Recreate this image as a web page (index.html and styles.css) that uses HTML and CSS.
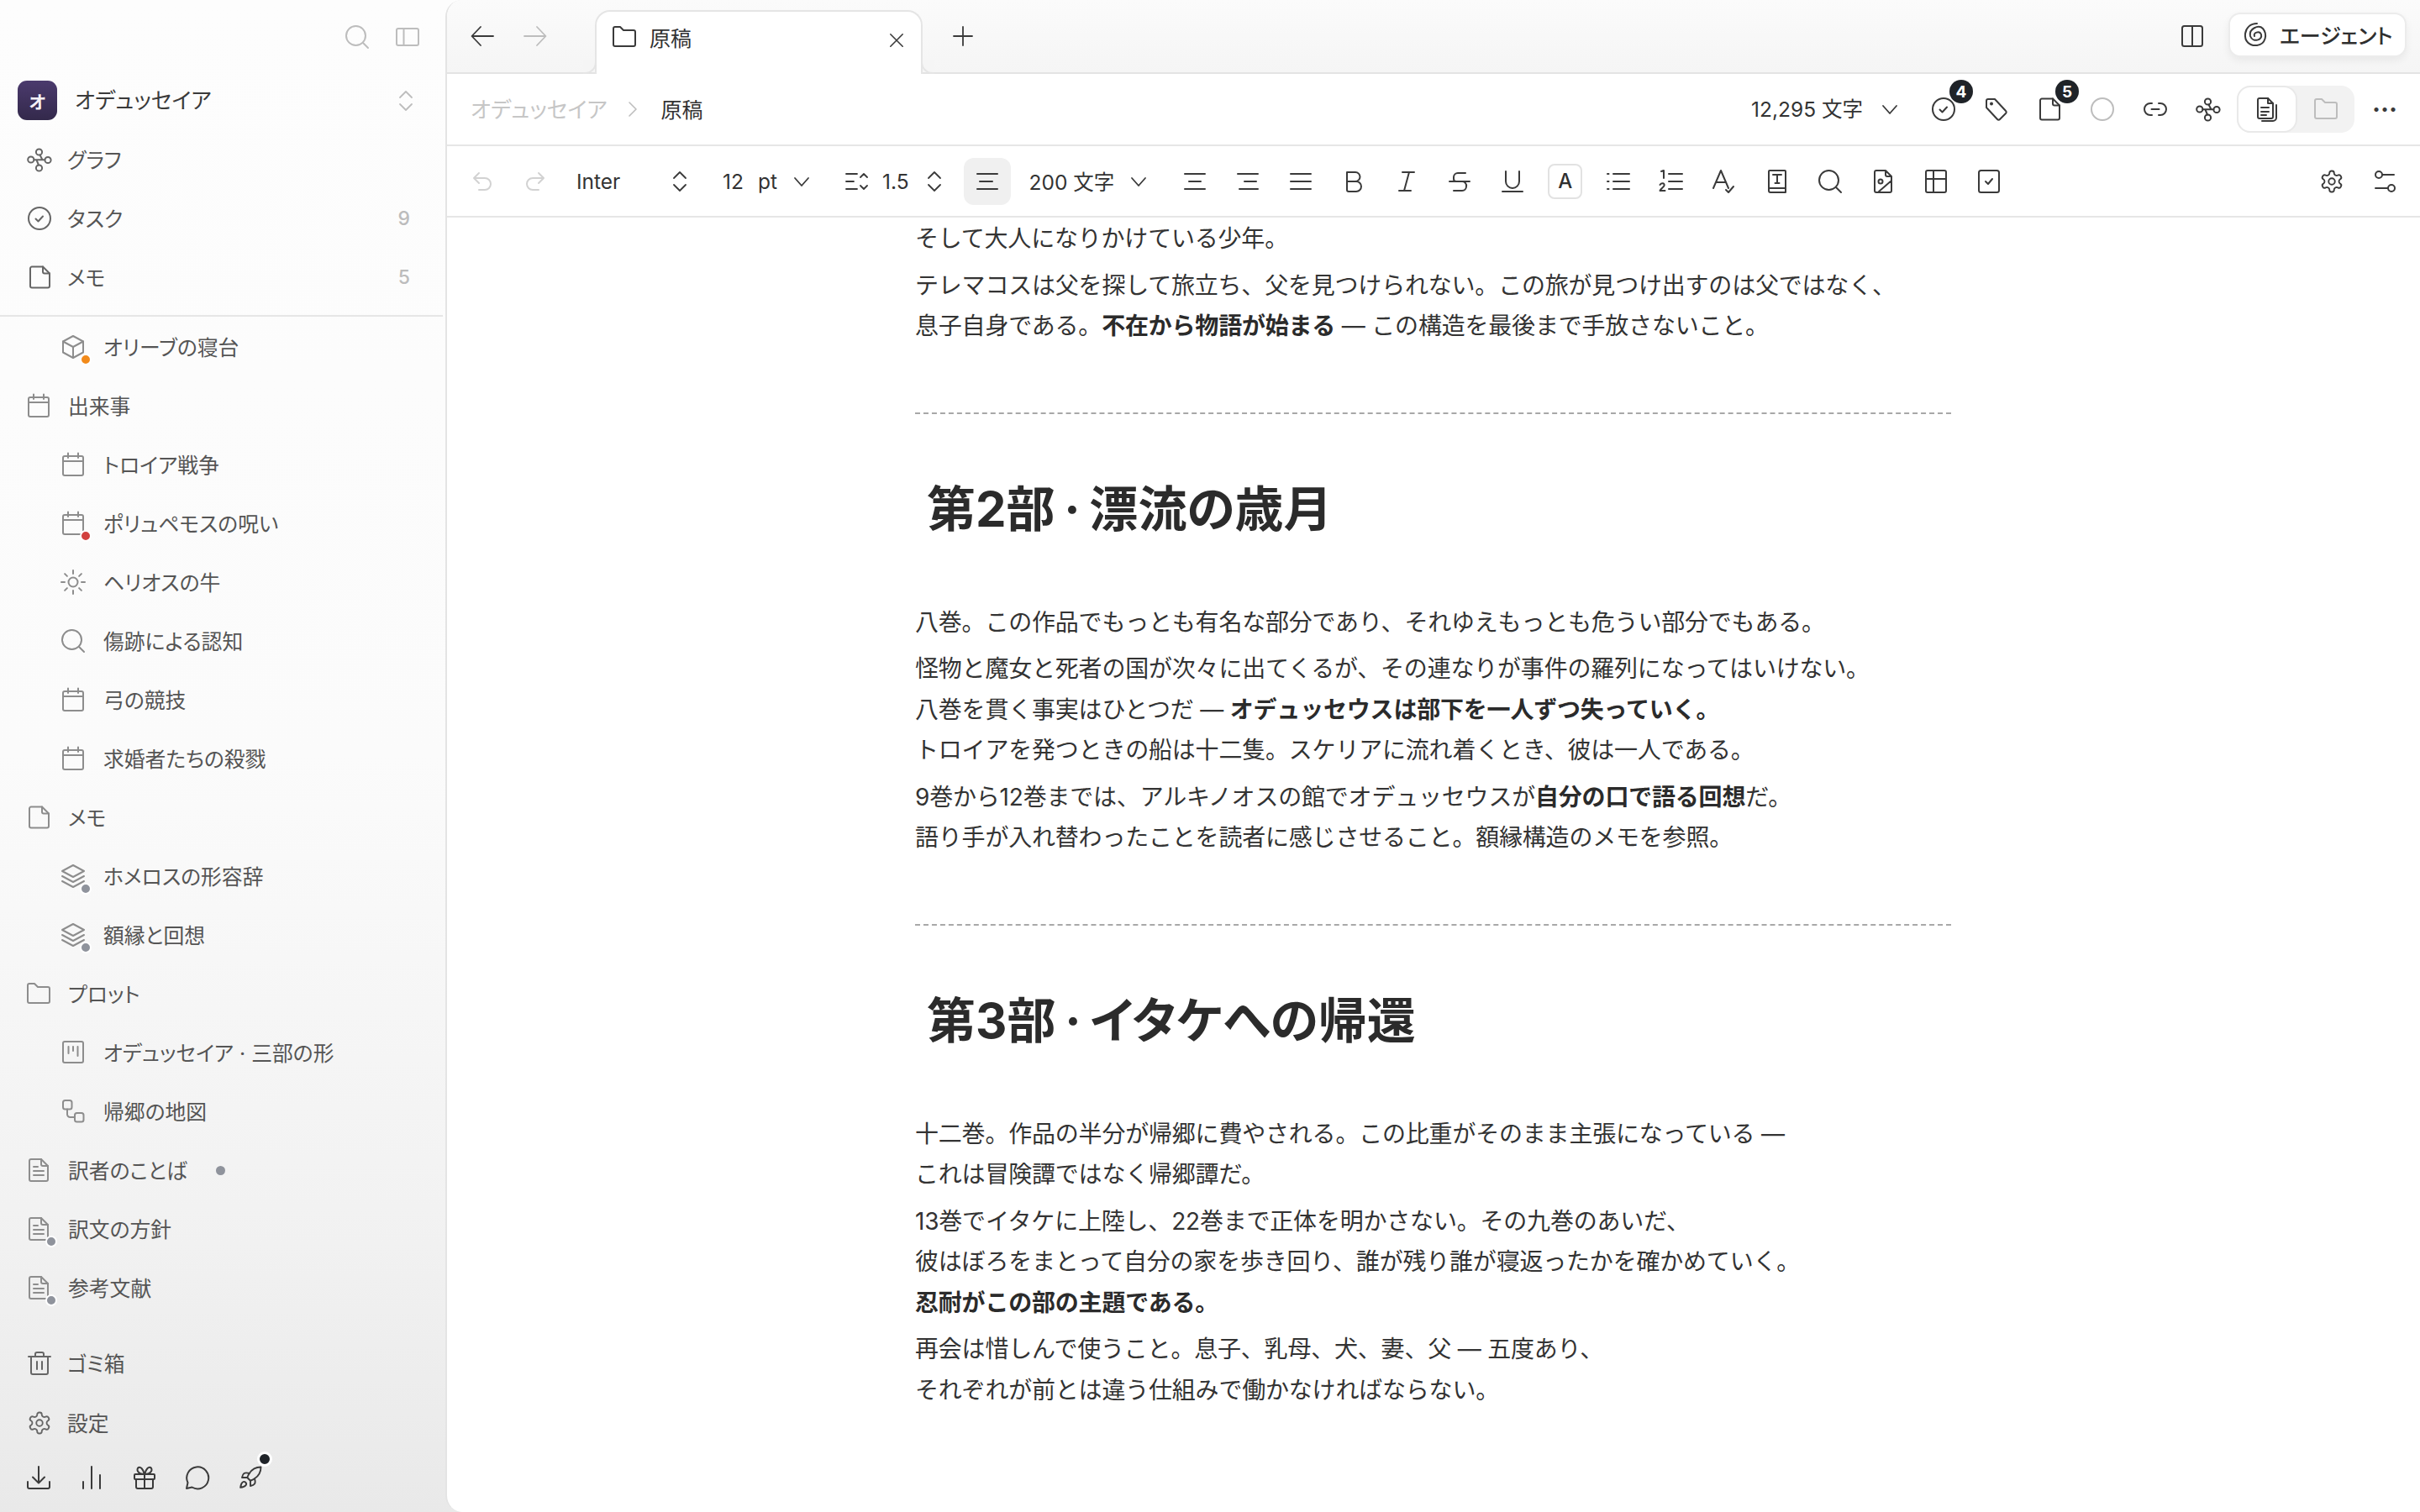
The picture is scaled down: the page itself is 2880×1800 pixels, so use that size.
FILE: index.html
```html
<!DOCTYPE html>
<html lang="ja">
<head>
<meta charset="utf-8">
<title>原稿</title>
<link rel="stylesheet" href="styles.css">
</head>
<body>
<svg class="defs" width="0" height="0">
  <symbol id="search" viewBox="0 0 30 30"><circle cx="13.5" cy="13.5" r="11.5"/><path d="M22 22l6 6"/></symbol>
  <symbol id="panel" viewBox="0 0 30 30"><rect x="2" y="5" width="26" height="20" rx="2"/><path d="M10.5 5v20"/></symbol>
  <symbol id="updown" viewBox="0 0 30 30"><path d="M8 11l7-7 7 7M8 19l7 7 7-7"/></symbol>
  <symbol id="down" viewBox="0 0 30 30"><path d="M7 11l8 9 8-9"/></symbol>
  <symbol id="graph" viewBox="0 0 30 30"><circle cx="14.5" cy="6" r="3.6"/><circle cx="4.8" cy="15" r="3.6"/><circle cx="25" cy="15.5" r="3.6"/><circle cx="14.5" cy="25" r="3.6"/><path d="M8.4 15.2h13M15.5 9.5l3 5.700M14 21.500l-2.500-6"/></symbol>
  <symbol id="task" viewBox="0 0 30 30"><circle cx="15" cy="15" r="13"/><path d="M10.500 15.500l3 3 5.500-6"/></symbol>
  <symbol id="doc" viewBox="0 0 30 30"><path d="M4 4.500a2 2 0 0 1 2-2h13l8 8v15a2 2 0 0 1-2 2H6a2 2 0 0 1-2-2z"/><path d="M19 2.500v6a2 2 0 0 0 2 2h6"/></symbol>
  <symbol id="cube" viewBox="0 0 30 30"><path d="M15 2l12 6.500v13L15 28 3 21.500v-13z"/><path d="M3 8.500L15 15l12-6.500M15 15v13"/></symbol>
  <symbol id="cal" viewBox="0 0 30 30"><rect x="3" y="5" width="24" height="23" rx="2"/><path d="M3 11h24M9 1.500V7M21 1.500V7"/></symbol>
  <symbol id="sun" viewBox="0 0 30 30"><circle cx="15" cy="15" r="5.500"/><path d="M15 1v4M15 25v4M1 15h4M25 15h4M5.100 5.100l2.800 2.800M22.100 22.100l2.800 2.800M5.100 24.900l2.800-2.800M22.100 7.900l2.800-2.800"/></symbol>
  <symbol id="layers" viewBox="0 0 30 30"><path d="M15 2l13 7-13 7L2 9z"/><path d="M2 15l13 7 13-7M2 21l13 7 13-7"/></symbol>
  <symbol id="folder" viewBox="0 0 30 30"><path d="M2 5a2 2 0 0 1 2-2h6l4 4h12a2 2 0 0 1 2 2v15a2 2 0 0 1-2 2H4a2 2 0 0 1-2-2z"/></symbol>
  <symbol id="kanban" viewBox="0 0 30 30"><rect x="3" y="2" width="24" height="25" rx="2"/><path d="M9.500 8v8M15 8v5M20.500 8v11"/></symbol>
  <symbol id="flow" viewBox="0 0 30 30"><rect x="3" y="2" width="10.500" height="10.500" rx="2.500"/><rect x="17" y="17" width="10.500" height="10.500" rx="2.500"/><path d="M8 12.500v6a3.500 3.500 0 0 0 3.500 3.500H17"/></symbol>
  <symbol id="filetext" viewBox="0 0 30 30"><path d="M4 4a2 2 0 0 1 2-2h12l8 8v16a2 2 0 0 1-2 2H6a2 2 0 0 1-2-2z"/><path d="M18 2v6a2 2 0 0 0 2 2h6M9 11h5M9 16h12M9 21h12"/></symbol>
  <symbol id="trash" viewBox="0 0 30 30"><path d="M2 7h26M10 7V4a2 2 0 0 1 2-2h6a2 2 0 0 1 2 2v3M5 7v19a2 2 0 0 0 2 2h16a2 2 0 0 0 2-2V7M12 13v9M18 13v9"/></symbol>
  <symbol id="gear" viewBox="0 0 24 24" stroke-width="1.500"><path d="M12.220 2h-.440a2 2 0 0 0-2 2v.180a2 2 0 0 1-1 1.730l-.430.250a2 2 0 0 1-2 0l-.150-.080a2 2 0 0 0-2.730.730l-.220.380a2 2 0 0 0 .730 2.730l.150.100a2 2 0 0 1 1 1.720v.510a2 2 0 0 1-1 1.740l-.150.090a2 2 0 0 0-.730 2.730l.220.380a2 2 0 0 0 2.730.730l.150-.080a2 2 0 0 1 2 0l.430.250a2 2 0 0 1 1 1.730V20a2 2 0 0 0 2 2h.440a2 2 0 0 0 2-2v-.180a2 2 0 0 1 1-1.730l.430-.250a2 2 0 0 1 2 0l.150.080a2 2 0 0 0 2.730-.730l.220-.390a2 2 0 0 0-.730-2.730l-.150-.080a2 2 0 0 1-1-1.740v-.500a2 2 0 0 1 1-1.740l.150-.090a2 2 0 0 0 .730-2.730l-.220-.380a2 2 0 0 0-2.730-.730l-.150.080a2 2 0 0 1-2 0l-.430-.250a2 2 0 0 1-1-1.730V4a2 2 0 0 0-2-2z"/><circle cx="12" cy="12" r="3"/></symbol>
  <symbol id="download" viewBox="0 0 30 30"><path d="M15 2v19M8 14.500l7 7 7-7M2 20v6a2 2 0 0 0 2 2h22a2 2 0 0 0 2-2v-6"/></symbol>
  <symbol id="bars" viewBox="0 0 30 30"><path d="M5 20v8M15 2v26M25 12v16"/></symbol>
  <symbol id="gift" viewBox="0 0 30 30"><rect x="3" y="11" width="24" height="6" rx="1"/><path d="M5 17v9a2 2 0 0 0 2 2h16a2 2 0 0 0 2-2v-9M15 11v17M15 11C13 4 10 2 8 3c-3 1.500-2 8 7 8zM15 11c2-7 5-9 7-8 3 1.500 2 8-7 8z"/></symbol>
  <symbol id="chat" viewBox="0 0 30 30"><path d="M8.500 26.500A13 13 0 1 0 3.500 21L2 28z"/></symbol>
  <symbol id="rocket" viewBox="0 0 24 24" stroke-width="1.500"><path d="M4.500 16.500c-1.500 1.260-2 5-2 5s3.740-.5 5-2c.71-.84.700-2.130-.09-2.910a2.180 2.180 0 0 0-2.910-.09z"/><path d="m12 15-3-3a22 22 0 0 1 2-3.950A12.880 12.880 0 0 1 22 2c0 2.720-.78 7.500-6 11a22.350 22.350 0 0 1-4 2z"/><path d="M9 12H4s.55-3.030 2-4c1.620-1.080 5 0 5 0"/><path d="M12 15v5s3.030-.55 4-2c1.080-1.620 0-5 0-5"/></symbol>
  <symbol id="back" viewBox="0 0 30 30"><path d="M28 15H3M13 4L2.500 15 13 26"/></symbol>
  <symbol id="fwd" viewBox="0 0 30 30"><path d="M2 15h25M17 4l10.500 11L17 26"/></symbol>
  <symbol id="close" viewBox="0 0 30 30"><path d="M6 6l18 18M24 6L6 24"/></symbol>
  <symbol id="plus" viewBox="0 0 30 30"><path d="M15 4v22M4 15h22"/></symbol>
  <symbol id="right" viewBox="0 0 30 30"><path d="M10 5l10 10-10 10"/></symbol>
  <symbol id="undo" viewBox="0 0 30 30"><path d="M11 5L5 11l6 6M5 11h13a7 7 0 0 1 0 14h-7"/></symbol>
  <symbol id="redo" viewBox="0 0 30 30"><path d="M19 5l6 6-6 6M25 11H12a7 7 0 0 0 0 14h7"/></symbol>
  <symbol id="lineh" viewBox="0 0 30 30"><path d="M2 6h13M2 15h9M2 24h13M19 10l4-4 4 4M19 20l4 4 4-4"/></symbol>
  <symbol id="al" viewBox="0 0 30 30"><path d="M3 6h24M6 15h15M3 24h24"/></symbol>
  <symbol id="ac" viewBox="0 0 30 30"><path d="M3 6h24M8 15h14M3 24h24"/></symbol>
  <symbol id="ar" viewBox="0 0 30 30"><path d="M3 6h24M11 15h14M5 24h22"/></symbol>
  <symbol id="aj" viewBox="0 0 30 30"><path d="M3 6h24M3 15h24M3 24h24"/></symbol>
  <symbol id="bold" viewBox="0 0 30 30"><path d="M7 4h10a5.500 5.500 0 0 1 0 11H7zM7 15h11a6 6 0 0 1 0 12H9a2 2 0 0 1-2-2z"/></symbol>
  <symbol id="italic" viewBox="0 0 30 30"><path d="M10 4h14M6 26h14M18 4l-6 22"/></symbol>
  <symbol id="strike" viewBox="0 0 30 30"><path d="M22 5H13a5 5 0 0 0-5 5v2a3 3 0 0 0 3 3M3 15h24M18 15a5 5 0 0 1 5 6 5 5 0 0 1-5 5H8"/></symbol>
  <symbol id="under" viewBox="0 0 30 30"><path d="M7 3v12a8 8 0 0 0 16 0V3M3 27h24"/></symbol>
  <symbol id="list" viewBox="0 0 30 30"><path d="M9 6h19M9 15h19M9 24h19M2 6h1.500M2 15h1.500M2 24h1.500"/></symbol>
  <symbol id="olist" viewBox="0 0 30 30"><path d="M12 6h16M12 24h16M12 15h16M3 3l3-1v9M1.500 19c2-3 6-2 5 1-.5 2-4 3-5 6h6"/></symbol>
  <symbol id="spell" viewBox="0 0 30 30"><path d="M2 23L11 2l9 21M5 16h12M17 25l3 3 6-7"/></symbol>
  <symbol id="book" viewBox="0 0 30 30"><path d="M5 3a1 1 0 0 1 1-1h18a1 1 0 0 1 1 1v25H7a2 2 0 0 1-2-2zM5 23h20M10 7h10M15 7v10M12.500 17h5"/></symbol>
  <symbol id="image" viewBox="0 0 30 30"><path d="M5 4a2 2 0 0 1 2-2h11l7 7v17a2 2 0 0 1-2 2H7a2 2 0 0 1-2-2zM18 2v5a2 2 0 0 0 2 2h5M10 27l15-13"/><circle cx="12" cy="15" r="2.500"/></symbol>
  <symbol id="table" viewBox="0 0 30 30"><rect x="3" y="2" width="24" height="26" rx="2"/><path d="M3 12h24M12 2v26"/></symbol>
  <symbol id="csq" viewBox="0 0 30 30"><rect x="3" y="2" width="24" height="26" rx="2.500"/><path d="M11 15l3 3 5-6"/></symbol>
  <symbol id="sliders" viewBox="0 0 30 30"><circle cx="8" cy="7" r="4"/><path d="M12 7h14M4 23h15"/><circle cx="23" cy="23" r="4"/></symbol>
  <symbol id="tag" viewBox="0 0 30 30"><path d="M3 5a2 2 0 0 1 2-2h8l13 14a2 2 0 0 1 0 3l-7 7a2 2 0 0 1-3 0L3 13z"/><circle cx="9" cy="8.500" r="1"/></symbol>
  <symbol id="circle" viewBox="0 0 30 30"><circle cx="15" cy="15" r="13"/></symbol>
  <symbol id="link" viewBox="0 0 30 30"><path d="M11 8H9a7 7 0 0 0 0 14h2M19 8h2a7 7 0 0 1 0 14h-2M10.500 15h9"/></symbol>
  <symbol id="docs" viewBox="0 0 30 30"><path d="M4 4a2 2 0 0 1 2-2h10l6 6v16a2 2 0 0 1-2 2H6a2 2 0 0 1-2-2z"/><path d="M16 2v6h6M8 13h9M8 18h9M8 22h6M26 10v15a4 4 0 0 1-4 4H9"/></symbol>
  <symbol id="split" viewBox="0 0 30 30"><rect x="3" y="3" width="24" height="24" rx="2.500"/><path d="M15 3v24"/></symbol>
  <symbol id="spiral" viewBox="0 0 30 30"><path d="M13 17c-2-4 6-7 8-2 2 7-10 10-13 2C6 8 18 3 23 8c6 7 3 19-7 20C7 29 1 23 2 14 3 7 8 2 16 2"/></symbol>
</svg>

<aside class="sidebar">
  <div class="side-top">
    <svg class="ic ic-faint"><use href="#search"/></svg>
    <svg class="ic ic-faint"><use href="#panel"/></svg>
  </div>
  <div class="workspace">
    <span class="ws-logo">オ</span>
    <span class="ws-name">オデュッセイア</span>
    <svg class="ic ic-faint ic-thin"><use href="#updown"/></svg>
  </div>
  <nav class="nav">
    <a class="row top"><svg class="ic"><use href="#graph"/></svg><span>グラフ</span></a>
    <a class="row top"><svg class="ic"><use href="#task"/></svg><span>タスク</span><em class="count">9</em></a>
    <a class="row top"><svg class="ic"><use href="#doc"/></svg><span>メモ</span><em class="count">5</em></a>
  </nav>
  <div class="side-rule"></div>
  <div class="tree">
    <a class="row sub"><span class="ico-wrap"><svg class="ic"><use href="#cube"/></svg><i class="dot orange"></i></span><span>オリーブの寝台</span></a>
    <a class="row lvl"><svg class="ic"><use href="#cal"/></svg><span>出来事</span></a>
    <a class="row sub"><svg class="ic"><use href="#cal"/></svg><span>トロイア戦争</span></a>
    <a class="row sub"><span class="ico-wrap"><svg class="ic"><use href="#cal"/></svg><i class="dot red"></i></span><span>ポリュペモスの呪い</span></a>
    <a class="row sub"><svg class="ic"><use href="#sun"/></svg><span>ヘリオスの牛</span></a>
    <a class="row sub"><svg class="ic"><use href="#search"/></svg><span>傷跡による認知</span></a>
    <a class="row sub"><svg class="ic"><use href="#cal"/></svg><span>弓の競技</span></a>
    <a class="row sub"><svg class="ic"><use href="#cal"/></svg><span>求婚者たちの殺戮</span></a>
    <a class="row lvl"><svg class="ic"><use href="#doc"/></svg><span>メモ</span></a>
    <a class="row sub"><span class="ico-wrap"><svg class="ic"><use href="#layers"/></svg><i class="dot gray"></i></span><span>ホメロスの形容辞</span></a>
    <a class="row sub"><span class="ico-wrap"><svg class="ic"><use href="#layers"/></svg><i class="dot gray"></i></span><span>額縁と回想</span></a>
    <a class="row lvl"><svg class="ic"><use href="#folder"/></svg><span>プロット</span></a>
    <a class="row sub"><svg class="ic"><use href="#kanban"/></svg><span>オデュッセイア · 三部の形</span></a>
    <a class="row sub"><svg class="ic"><use href="#flow"/></svg><span>帰郷の地図</span></a>
    <a class="row lvl"><svg class="ic"><use href="#filetext"/></svg><span>訳者のことば</span><i class="dot-inline"></i></a>
    <a class="row lvl"><span class="ico-wrap"><svg class="ic"><use href="#filetext"/></svg><i class="dot gray"></i></span><span>訳文の方針</span></a>
    <a class="row lvl"><span class="ico-wrap"><svg class="ic"><use href="#filetext"/></svg><i class="dot gray"></i></span><span>参考文献</span></a>
  </div>
  <div class="side-foot">
    <a class="row top"><svg class="ic"><use href="#trash"/></svg><span>ゴミ箱</span></a>
    <a class="row top"><svg class="ic"><use href="#gear"/></svg><span>設定</span></a>
  </div>
  <div class="side-tools">
    <button class="tool"><svg class="ic ic-dark"><use href="#download"/></svg></button>
    <button class="tool"><svg class="ic ic-dark"><use href="#bars"/></svg></button>
    <button class="tool"><svg class="ic ic-dark"><use href="#gift"/></svg></button>
    <button class="tool"><svg class="ic ic-dark"><use href="#chat"/></svg></button>
    <button class="tool"><span class="ico-wrap"><svg class="ic ic-dark"><use href="#rocket"/></svg><i class="dot ink"></i></span></button>
  </div>
</aside>

<main class="main">
  <header class="tabbar">
    <button class="nav-btn"><svg class="ic ic-dark ic-thin"><use href="#back"/></svg></button>
    <button class="nav-btn"><svg class="ic ic-faint ic-thin"><use href="#fwd"/></svg></button>
    <div class="tab">
      <svg class="ic ic-dark"><use href="#folder"/></svg>
      <span class="tab-title">原稿</span>
      <svg class="ic ic-dark ic-small tab-close"><use href="#close"/></svg>
    </div>
    <svg class="ic ic-dark ic-thin tab-plus"><use href="#plus"/></svg>
    <div class="spacer"></div>
    <svg class="ic ic-dark"><use href="#split"/></svg>
    <button class="agent"><svg class="ic ic-dark"><use href="#spiral"/></svg><span>エージェント</span></button>
  </header>

  <div class="crumbs">
    <span class="crumb-muted">オデュッセイア</span>
    <svg class="ic ic-faint ic-small crumb-sep"><use href="#right"/></svg>
    <span class="crumb-now">原稿</span>
    <div class="spacer"></div>
    <span class="wordcount">12,295 文字</span>
    <svg class="ic ic-dark ic-thin wc-chev"><use href="#down"/></svg>
    <span class="btn"><svg class="ic ic-dark"><use href="#task"/></svg><b class="badge">4</b></span>
    <span class="btn"><svg class="ic ic-dark"><use href="#tag"/></svg></span>
    <span class="btn"><svg class="ic ic-dark"><use href="#doc"/></svg><b class="badge">5</b></span>
    <span class="btn"><svg class="ic ic-faint"><use href="#circle"/></svg></span>
    <span class="btn"><svg class="ic ic-dark"><use href="#link"/></svg></span>
    <span class="btn"><svg class="ic ic-dark"><use href="#graph"/></svg></span>
    <div class="seg">
      <span class="seg-on"><svg class="ic ic-dark"><use href="#docs"/></svg></span>
      <span class="seg-off"><svg class="ic ic-faint"><use href="#folder"/></svg></span>
    </div>
    <span class="dots">···</span>
  </div>

  <div class="toolbar">
    <span class="btn"><svg class="ic ic-pale"><use href="#undo"/></svg></span>
    <span class="btn"><svg class="ic ic-pale"><use href="#redo"/></svg></span>
    <span class="sel-font"><span>Inter</span><svg class="ic ic-dark ic-thin"><use href="#updown"/></svg></span>
    <span class="sel-size"><span>12</span><span>pt</span><svg class="ic ic-dark ic-thin"><use href="#down"/></svg></span>
    <span class="sel-line"><svg class="ic ic-dark ic-thin"><use href="#lineh"/></svg><span>1.5</span><svg class="ic ic-dark ic-thin"><use href="#updown"/></svg></span>
    <span class="align-on"><svg class="ic ic-dark"><use href="#al"/></svg></span>
    <span class="sel-width"><span>200 文字</span><svg class="ic ic-dark ic-thin"><use href="#down"/></svg></span>
    <span class="btn"><svg class="ic ic-dark"><use href="#ac"/></svg></span>
    <span class="btn"><svg class="ic ic-dark"><use href="#ar"/></svg></span>
    <span class="btn"><svg class="ic ic-dark"><use href="#aj"/></svg></span>
    <span class="btn"><svg class="ic ic-dark"><use href="#bold"/></svg></span>
    <span class="btn"><svg class="ic ic-dark"><use href="#italic"/></svg></span>
    <span class="btn"><svg class="ic ic-dark"><use href="#strike"/></svg></span>
    <span class="btn"><svg class="ic ic-dark"><use href="#under"/></svg></span>
    <span class="btn"><span class="a-box">A</span></span>
    <span class="btn"><svg class="ic ic-dark"><use href="#list"/></svg></span>
    <span class="btn"><svg class="ic ic-dark"><use href="#olist"/></svg></span>
    <span class="btn"><svg class="ic ic-dark"><use href="#spell"/></svg></span>
    <span class="btn"><svg class="ic ic-dark"><use href="#book"/></svg></span>
    <span class="btn"><svg class="ic ic-dark"><use href="#search"/></svg></span>
    <span class="btn"><svg class="ic ic-dark"><use href="#image"/></svg></span>
    <span class="btn"><svg class="ic ic-dark"><use href="#table"/></svg></span>
    <span class="btn"><svg class="ic ic-dark"><use href="#csq"/></svg></span>
    <div class="spacer"></div>
    <span class="btn"><svg class="ic ic-dark"><use href="#gear"/></svg></span>
    <span class="btn"><svg class="ic ic-dark"><use href="#sliders"/></svg></span>
  </div>

  <article class="editor">
    <p>そして大人になりかけている少年。</p>
    <p>テレマコスは父を探して旅立ち、父を見つけられない。この旅が見つけ出すのは父ではなく、<br>息子自身である。<strong>不在から物語が始まる</strong> — この構造を最後まで手放さないこと。</p>
    <hr>
    <h2>第2部 · 漂流の歳月</h2>
    <p>八巻。この作品でもっとも有名な部分であり、それゆえもっとも危うい部分でもある。</p>
    <p>怪物と魔女と死者の国が次々に出てくるが、その連なりが事件の羅列になってはいけない。<br>八巻を貫く事実はひとつだ — <strong>オデュッセウスは部下を一人ずつ失っていく。</strong><br>トロイアを発つときの船は十二隻。スケリアに流れ着くとき、彼は一人である。</p>
    <p>9巻から12巻までは、アルキノオスの館でオデュッセウスが<strong>自分の口で語る回想</strong>だ。<br>語り手が入れ替わったことを読者に感じさせること。額縁構造のメモを参照。</p>
    <hr>
    <h2>第3部 · イタケへの帰還</h2>
    <p>十二巻。作品の半分が帰郷に費やされる。この比重がそのまま主張になっている —<br>これは冒険譚ではなく帰郷譚だ。</p>
    <p>13巻でイタケに上陸し、22巻まで正体を明かさない。その九巻のあいだ、<br>彼はぼろをまとって自分の家を歩き回り、誰が残り誰が寝返ったかを確かめていく。<br><strong>忍耐がこの部の主題である。</strong></p>
    <p>再会は惜しんで使うこと。息子、乳母、犬、妻、父 — 五度あり、<br>それぞれが前とは違う仕組みで働かなければならない。</p>
  </article>
</main>
</body>
</html>
```

FILE: styles.css
```css
* { box-sizing: border-box; }
html, body { margin: 0; height: 100%; }
body {
  display: flex;
  width: 2880px;
  height: 1800px;
  overflow: hidden;
  font-family: Inter, "Noto Sans CJK JP", sans-serif;
  font-feature-settings: "palt";
  color: #333;
  background: linear-gradient(#fdfdfd 0%, #fbfbfb 50%, #f2f2f2 80%, #e9e9e9 100%);
}
.defs { position: absolute; }
button { border: 0; background: none; padding: 0; font: inherit; color: inherit; }
.spacer { flex: 1; }

.ic {
  width: 30px; height: 30px; flex: none;
  fill: none; stroke: currentColor; stroke-width: 2;
  stroke-linecap: round; stroke-linejoin: round;
  color: #666;
  display: block;
}
.ic-dark { color: #3a3a3a; }
.ic-faint { color: #bdbdbd; }
.ic-pale { color: #d2d2d2; }
.ic-thin { stroke-width: 1.800; }
.ic-small { width: 24px; height: 24px; }

/* sidebar */
.sidebar {
  width: 530px; flex: none; height: 1800px;
  display: flex; flex-direction: column;
  overflow: hidden;
}
.side-top { height: 88px; flex: none; display: flex; align-items: center; justify-content: flex-end; gap: 30px; padding: 0 30px 0 0; }
.workspace { height: 47px; flex: none; margin-top: 8px; padding: 0 32px 0 21px; display: flex; align-items: center; }
.ws-logo {
  width: 47px; height: 47px; border-radius: 11px; flex: none;
  background: linear-gradient(#4b3a6d, #33294b);
  color: #f5f1f7; font-size: 21px; font-weight: 700;
  display: flex; align-items: center; justify-content: center;
}
.ws-name { margin-left: 21px; padding-bottom: 4px; flex: 1; font-size: 26px; color: #3a3a3a; }
.nav { margin-top: 12px; flex: none; }
.row {
  height: 70px; flex: none; display: flex; align-items: center;
  font-size: 24.800px; color: #555;
}
.row > span:not(.ico-wrap) { padding-bottom: 2px; }
.row.top { padding: 0 42px 0 32px; gap: 18px; }
.row.lvl { padding: 0 30px 0 31px; gap: 20px; }
.row.sub { padding: 0 30px 0 72px; gap: 21px; }
.row.lvl .ic, .row.sub .ic { color: #8d8d8d; }
.count { margin-left: auto; font-style: normal; font-size: 23px; font-weight: 500; color: #bcbcbc; }
.side-rule { height: 2px; margin: 10px 3px 1px 0; background: #e6e6e6; flex: none; }
.tree { flex: none; }
.ico-wrap { position: relative; display: block; width: 30px; height: 30px; flex: none; }
.dot {
  position: absolute; right: -7px; bottom: -7px;
  width: 14px; height: 14px; border-radius: 50%;
  border: 2px solid #fff; box-sizing: border-box;
}
.orange { background: #f28a1a; }
.red { background: #d2413f; }
.gray { background: #8f939c; }
.ink { background: #1f2328; right: -11px; bottom: auto; top: -16px; width: 18px; height: 18px; border-width: 3px; }
.dot-inline { width: 11px; height: 11px; border-radius: 50%; background: #8f939c; margin-left: 14px; }
.side-foot { margin-top: 19px; flex: none; }
.side-foot .row { height: 71px; }
.side-tools { display: flex; padding-left: 14px; height: 60px; align-items: center; flex: none; }
.tool { width: 63px; display: flex; justify-content: center; }

/* main panel */
.main {
  flex: 1; min-width: 0; height: 1800px;
  display: flex; flex-direction: column;
  border-left: 2px solid #e4e4e4;
  border-radius: 20px 0 0 20px;
  overflow: hidden;
  background: #fff;
}
.tabbar {
  height: 88px; flex: none; display: flex; align-items: center;
  padding: 0 16px 0 10px;
  background: linear-gradient(#fbfbfb, #f5f5f5);
  border-bottom: 2px solid #e3e3e3;
}
.nav-btn { width: 63px; display: flex; justify-content: center; }
.tab {
  position: relative; align-self: flex-end;
  width: 390px; height: 76px; margin: 0 0 -2px 40px;
  padding: 0 17px 14px 18px;
  display: flex; align-items: center;
  background: #fff;
  border: 2px solid #e5e5e5; border-bottom: 0;
  border-radius: 18px 18px 0 0;
}
.tab::before, .tab::after {
  content: ""; position: absolute; bottom: 0; width: 14px; height: 14px;
  background: #f5f5f5;
}
.tab::before { left: -16px; border-right: 2px solid #e5e5e5; border-bottom: 2px solid #e5e5e5; border-bottom-right-radius: 14px; }
.tab::after { right: -16px; border-left: 2px solid #e5e5e5; border-bottom: 2px solid #e5e5e5; border-bottom-left-radius: 14px; }
.tab-title { margin-left: 15px; font-size: 25px; color: #333; }
.tab-close { margin-left: auto; margin-top: 8px; }
.tab-plus { margin-left: 33px; }
.agent {
  width: 212px; height: 53px; margin: 0 0 4px 28px;
  padding: 0 12px 0 16px;
  display: flex; align-items: center; gap: 13px;
  background: #fff; border: 2px solid #ececec; border-radius: 14px;
  box-shadow: 0 4px 10px rgba(0,0,0,.06);
  font-size: 25px; font-weight: 500; color: #2f2f2f; white-space: nowrap;
}

.crumbs {
  height: 86px; flex: none; display: flex; align-items: center;
  padding: 0 17px 0 28px;
  border-bottom: 2px solid #e6e6e6;
  font-size: 25px;
}
.crumbs > span:not(.btn):not(.dots) { padding-bottom: 3px; }
.crumb-muted { color: #c6c6c6; font-size: 26px; }
.crumb-sep { margin-left: 18px; }
.crumb-now { margin-left: 22px; color: #333; }
.wordcount { color: #333; font-size: 24.500px; }
.wc-chev { margin: 0 17px; }
.btn {
  position: relative; width: 63px; height: 56px; flex: none;
  display: flex; align-items: center; justify-content: center;
}
.badge {
  position: absolute; top: -7px; left: 39px;
  width: 28px; height: 28px; border-radius: 50%;
  background: #1f2328; color: #fff;
  font-size: 19px; font-weight: 700;
  display: flex; align-items: center; justify-content: center;
}
.seg {
  width: 140px; height: 56px; margin: 0 11px 0 3px; flex: none;
  display: flex; border-radius: 16px; background: #f2f2f2;
}
.seg-on {
  width: 72px; height: 56px; background: #fff;
  border: 2px solid #e9e9e9; border-radius: 16px;
  display: flex; align-items: center; justify-content: center;
}
.seg-off { flex: 1; display: flex; align-items: center; justify-content: center; }
.dots { width: 50px; text-align: center; font-size: 30px; font-weight: 700; color: #3a3a3a; line-height: 1; }

.toolbar {
  height: 85px; flex: none; display: flex; align-items: center;
  padding: 0 11px 0 10px;
  border-bottom: 2px solid #e6e6e6;
  font-size: 24.500px; color: #333;
}
.sel-font { width: 138px; margin-left: 18px; display: flex; align-items: center; justify-content: space-between; }
.sel-size { margin-left: 36px; display: flex; align-items: center; gap: 17px; }
.sel-size .ic { margin-left: -3px; }
.sel-line { margin-left: 36px; display: flex; align-items: center; gap: 15px; }
.align-on {
  width: 56px; height: 56px; margin-left: 20px; border-radius: 12px;
  background: #f0f0f0;
  display: flex; align-items: center; justify-content: center;
}
.sel-width { margin-left: 22px; margin-right: 20px; display: flex; align-items: center; gap: 14px; }
.a-box {
  width: 41px; height: 42px; border: 2px solid #e2e2e2; border-radius: 8px;
  display: flex; align-items: center; justify-content: center;
  font-size: 24px; font-weight: 500; color: #2f2f2f;
}

/* editor */
.editor {
  flex: 1; min-height: 0; overflow: hidden;
  padding: 1px 558px 0 557px;
  font-size: 28px; line-height: 48.500px; color: #333;
  font-feature-settings: normal;
  letter-spacing: -.2px;
}
.editor p { margin: 0 0 7px; white-space: nowrap; }
.editor strong { font-weight: 700; color: #2b2b2b; }
.editor hr {
  margin: 78px 0 0; border: 0;
  border-top: 2px dashed #a8a8a8;
  height: 2px;
}
.editor h2 {
  margin: 77px 0 75px 14px;
  font-size: 58px; line-height: 72px; font-weight: 700; color: #2b2b2b;
  font-feature-settings: "palt";
  letter-spacing: 0;
  word-spacing: -3px;
}
```
